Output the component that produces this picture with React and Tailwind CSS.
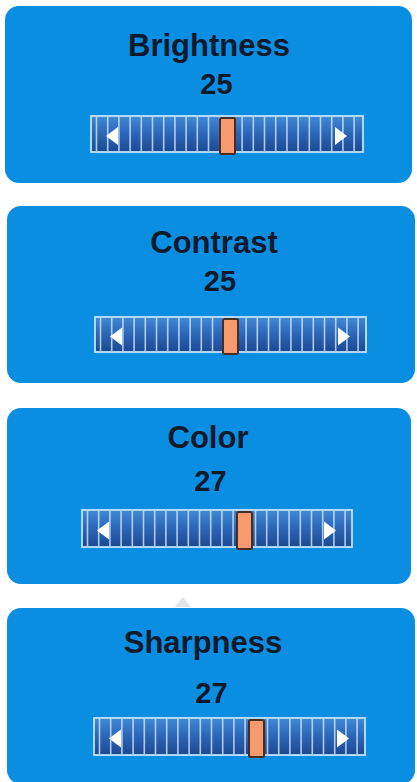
import React from 'react';

// Picture-settings panels: label, value and a segmented slider per setting
const PANELS = [
  {
    label: 'Brightness', value: 25,
    card: 'ml-[5px] w-[407px] mt-[6px] pt-[23px] pb-[28px]',
    title: 'pl-[1px]', num: 'pl-[16px] mt-[5px]', bar: 'ml-[85px] mt-[15px]',
    w: 274, h: 38, thumb: 130,
  },
  {
    label: 'Contrast', value: 25,
    card: 'ml-[7px] w-[408px] mt-[23px] pt-[20px] pb-[28px]',
    title: 'pl-[6px]', num: 'pl-[18px] mt-[5px]', bar: 'ml-[87px] mt-[19px]',
    w: 273, h: 37, thumb: 129,
  },
  {
    label: 'Color', value: 27,
    card: 'ml-[7px] w-[404px] mt-[25px] pt-[13px] pb-[34px]',
    title: 'pr-[2px]', num: 'pl-[3px] mt-[10px]', bar: 'ml-[74px] mt-[12px]',
    w: 272, h: 39, thumb: 156,
  },
  {
    label: 'Sharpness', value: 27,
    card: 'ml-[7px] w-[408px] mt-[24px] pt-[18px] pb-[26px]',
    title: 'pr-[16px]', num: 'pl-[1px] mt-[17px]', bar: 'ml-[86px] mt-[8px]',
    w: 273, h: 39, thumb: 156, pointer: true,
  },
];

function Slider({ w, h, thumb, id }) {
  const lines = [];
  for (let x = 6.5; x < w - 3; x += 11.2) lines.push(x);
  const cy = h / 2 + 2;
  return (
    <svg width={w} height={h + 2} viewBox={`0 0 ${w} ${h + 2}`} className="block">
      <defs>
        <linearGradient id={`g${id}`} x1="0" y1="0" x2="0" y2="1">
          <stop offset="0" stopColor="#4289d8" />
          <stop offset="0.45" stopColor="#2d69ba" />
          <stop offset="1" stopColor="#1c4892" />
        </linearGradient>
      </defs>
      <rect x="1" y="1" width={w - 2} height={h - 2} fill={`url(#g${id})`} />
      {lines.map((x) => (
        <line key={x} x1={x} y1="2" x2={x} y2={h - 2} stroke="#d2e9fc" strokeOpacity="0.8" strokeWidth="1.6" />
      ))}
      <rect x="1" y="1" width={w - 2} height={h - 2} fill="none" stroke="#bfe3fa" strokeWidth="1.8" />
      <polygon points={`16,${cy} 28,${cy - 9} 28,${cy + 9}`} fill="#ffffff" />
      <polygon points={`${w - 17},${cy} ${w - 29},${cy - 9} ${w - 29},${cy + 9}`} fill="#ffffff" />
      <rect x={thumb} y="3" width="15" height={h - 2} rx="1.5" fill="#f79b6f" stroke="#4a2c22" strokeWidth="2" />
    </svg>
  );
}

export default function App() {
  return (
    <div className="w-[417px] h-[782px] overflow-hidden bg-white flex flex-col font-['Liberation_Sans',Arial,sans-serif] font-bold text-[#0c1a2c]">
      {PANELS.map((p, i) => (
        <div key={p.label} className={`relative shrink-0 flex flex-col rounded-[14px] bg-[#0a8ee2] ${p.card}`}>
          {p.pointer && (
            <svg width="16" height="10" viewBox="0 0 16 10" className="absolute left-[168px] -top-[11px] opacity-25">
              <polygon points="8,0 16,10 0,10" fill="#8a9aa8" />
            </svg>
          )}
          <div className={`text-center text-[31px] leading-[34px] ${p.title}`}>{p.label}</div>
          <div className={`text-center text-[29px] leading-[32px] ${p.num}`}>{p.value}</div>
          <div className={`self-start ${p.bar}`}>
            <Slider w={p.w} h={p.h} thumb={p.thumb} id={i} />
          </div>
        </div>
      ))}
    </div>
  );
}
